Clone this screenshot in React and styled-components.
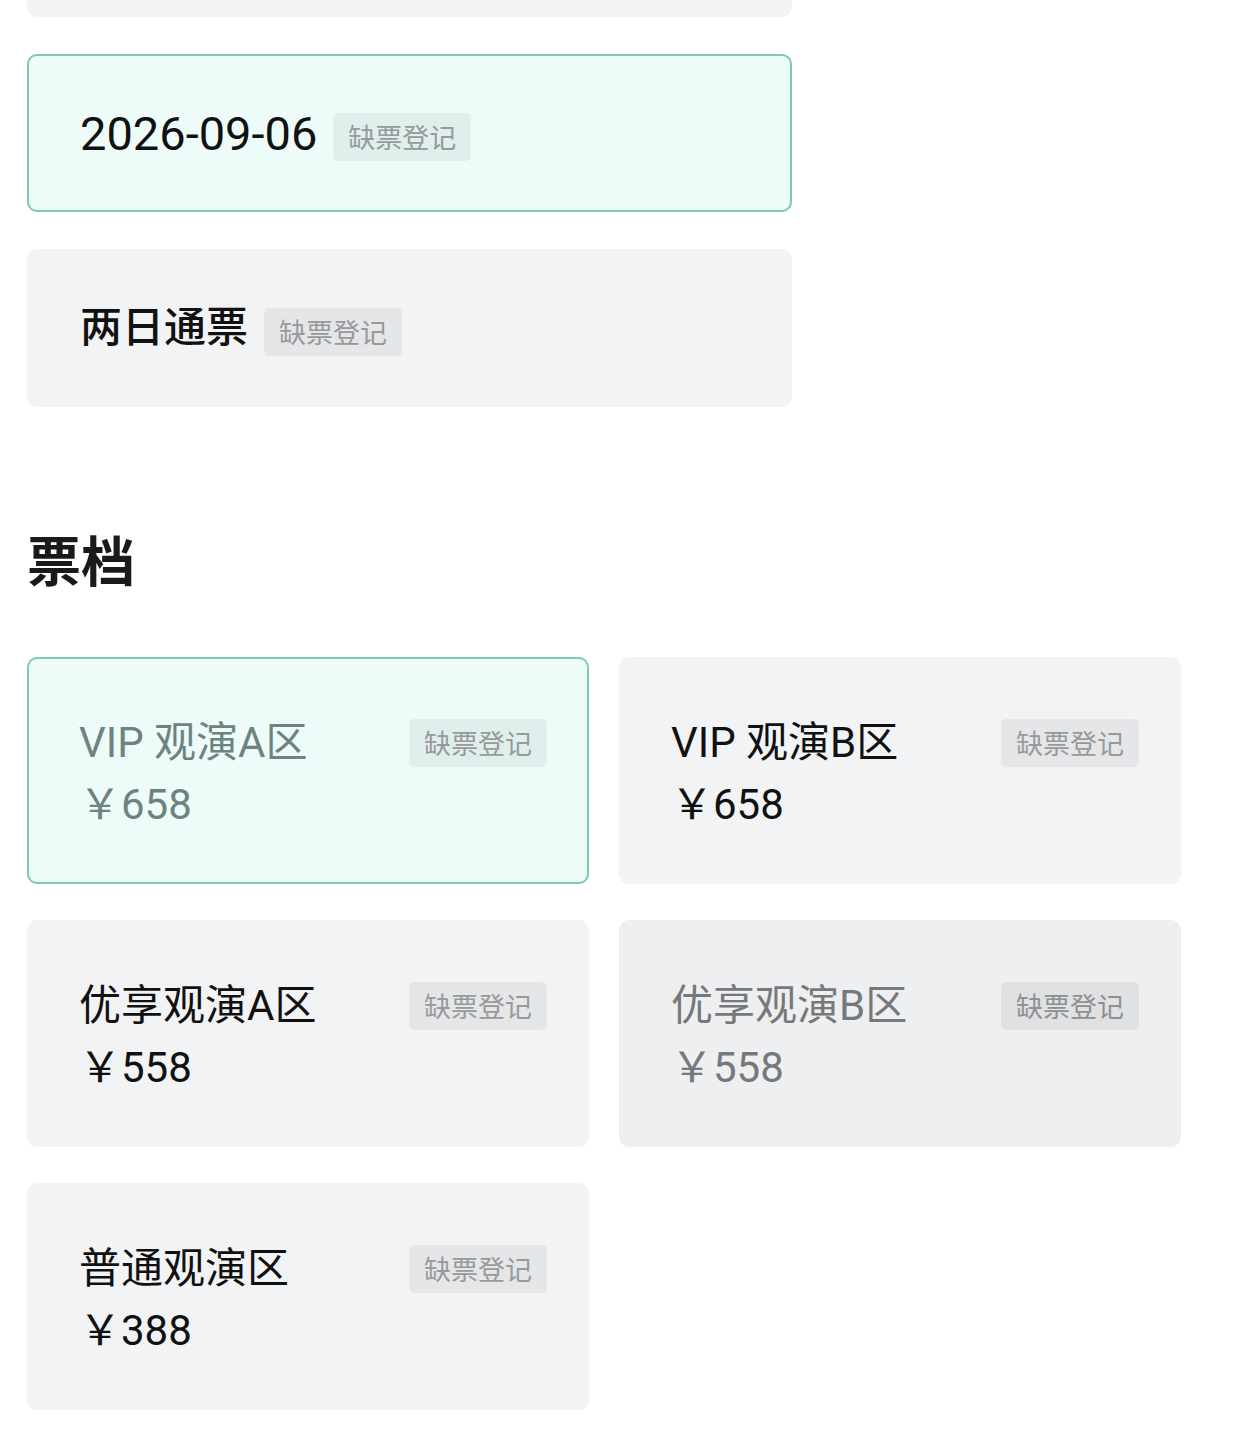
import React from "react";
import styled, { createGlobalStyle, css } from "styled-components";

const GlobalStyle = createGlobalStyle`
  html, body {
    margin: 0;
    padding: 0;
    background: #ffffff;
  }
  body {
    font-family: Roboto, "Noto Sans CJK SC", "Noto Sans", sans-serif;
    color: #1a1a1a;
    overflow: hidden;
  }
`;

const Page = styled.div`
  padding: 0 0 40px 27px;
`;

const DateList = styled.div`
  width: 765px;
  display: flex;
  flex-direction: column;
  gap: 37px;
`;

// the card above the fold, only its bottom edge is still visible
const ScrolledCard = styled.div`
  height: 17px;
  border-radius: 0 0 10px 10px;
  background: #f2f3f5;
`;

const DateCard = styled.div`
  box-sizing: border-box;
  height: 158px;
  display: flex;
  align-items: center;
  gap: 16px;
  padding-left: 51px;
  border-radius: 10px;
  border: 2px solid transparent;
  background: #f2f3f5;

  ${({ $selected }) =>
    $selected &&
    css`
      background: #edfcf9;
      border-color: #7ccbb0;
    `}
`;

const DateLabel = styled.span`
  font-size: ${({ $digits }) => ($digits ? "47px" : "42px")};
  line-height: 1;
  font-weight: ${({ $digits }) => ($digits ? 400 : 500)};
  color: #111;
`;

const Tag = styled.span`
  display: inline-block;
  height: 48px;
  line-height: 48px;
  padding: 0 15px;
  margin-top: ${({ $offset }) => ($offset ? "8px" : "0")};
  font-size: 27px;
  border-radius: 5px;
  background: rgba(0, 0, 0, 0.05);
  color: #979a9d;
  white-space: nowrap;
  font-family: "Noto Sans CJK SC", sans-serif;

  ${({ $muted }) =>
    $muted &&
    css`
      background: rgba(0, 0, 0, 0.055);
      color: #8d9093;
    `}
`;

const SectionTitle = styled.h2`
  margin: 114px 0 60px;
  font-size: 54px;
  line-height: 76px;
  font-weight: 700;
  color: #1a1a1a;
  font-family: "Noto Sans CJK SC", sans-serif;
`;

const TicketGrid = styled.div`
  width: 1154px;
  display: grid;
  grid-template-columns: 1fr 1fr;
  column-gap: 30px;
  row-gap: 36px;
`;

const TicketCard = styled.div`
  box-sizing: border-box;
  height: 227px;
  padding: 54px 40px 0 50px;
  border-radius: 10px;
  border: 2px solid transparent;
  background: #f2f3f5;
  color: #111;

  ${({ $state }) =>
    $state === "selected" &&
    css`
      background: #edfcf9;
      border-color: #7ccbb0;
      color: #6d8380;
    `}

  ${({ $state }) =>
    $state === "disabled" &&
    css`
      background: #eeeff1;
      color: #76797c;
    `}
`;

const TicketHead = styled.div`
  height: 60px;
  display: flex;
  align-items: center;
  justify-content: space-between;
`;

const TicketName = styled.span`
  font-size: 42px;
  line-height: 60px;
`;

const TicketPrice = styled.div`
  font-size: 42px;
  line-height: 64px;
  font-weight: 400;
`;

const dates = [
  { label: "2026-09-06", digits: true, selected: true },
  { label: "两日通票" },
];

const tickets = [
  { name: "VIP 观演A区", price: 658, state: "selected" },
  { name: "VIP 观演B区", price: 658 },
  { name: "优享观演A区", price: 558 },
  { name: "优享观演B区", price: 558, state: "disabled" },
  { name: "普通观演区", price: 388 },
];

const App = () => {
  return (
    <>
      <GlobalStyle />
      <Page>
        <DateList>
          <ScrolledCard />
          {dates.map((d) => (
            <DateCard key={d.label} $selected={d.selected}>
              <DateLabel $digits={d.digits}>{d.label}</DateLabel>
              <Tag $offset>缺票登记</Tag>
            </DateCard>
          ))}
        </DateList>

        <SectionTitle>票档</SectionTitle>

        <TicketGrid>
          {tickets.map((t) => (
            <TicketCard key={t.name} $state={t.state}>
              <TicketHead>
                <TicketName>{t.name}</TicketName>
                <Tag $muted={t.state === "disabled"}>缺票登记</Tag>
              </TicketHead>
              <TicketPrice>￥{t.price}</TicketPrice>
            </TicketCard>
          ))}
        </TicketGrid>
      </Page>
    </>
  );
};

export default App;
